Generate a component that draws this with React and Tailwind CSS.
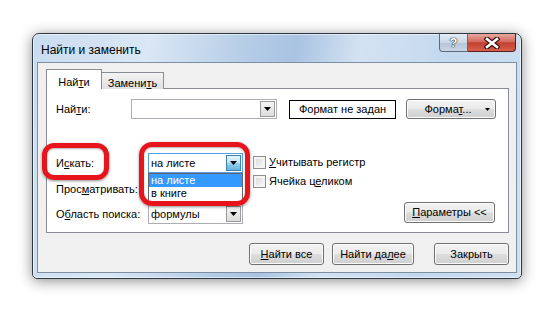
import React from "react";

const btn =
  "flex items-center justify-center rounded-[3px] border border-[#707070] bg-[linear-gradient(#f2f2f2_0%,#ebebeb_48%,#dddddd_52%,#cfcfcf_100%)] shadow-[inset_0_0_0_1px_#fcfcfc] text-[11px] text-black";

function Arrow({ active }) {
  return (
    <div
      className={`m-px flex w-[15px] items-center justify-center border ${
        active
          ? "border-[#3c7fb1] bg-[linear-gradient(#e5f4fc_0%,#c4e5f6_48%,#98d1ef_52%,#68b3db_100%)]"
          : "border-[#9a9a9a] bg-[linear-gradient(#f4f4f4,#dcdcdc)]"
      }`}
    >
      <svg width="7" height="4" viewBox="0 0 7 4">
        <path d="M0 0h7L3.5 4z" fill="#000" />
      </svg>
    </div>
  );
}

function Combo({ text, width, active, children }) {
  return (
    <div
      className={`relative flex h-[20px] ${width} border ${
        active ? "border-[#569de5]" : "border-[#abadb3]"
      } bg-white`}
    >
      <div className="flex flex-1 items-center pl-[2px] text-[11px] text-black">{text}</div>
      <Arrow active={active} />
      {children}
    </div>
  );
}

function Check({ children }) {
  return (
    <div className="flex h-[13px] items-center">
      <div className="h-[13px] w-[13px] border border-[#8e8f8f] bg-[linear-gradient(135deg,#d6d6d6,#fafafa)] shadow-[inset_0_0_0_2px_#f4f4f4]" />
      <span className="ml-[3px] text-[11px] text-black">{children}</span>
    </div>
  );
}

export default function App() {
  return (
    <div className="relative h-[313px] w-[553px] overflow-hidden bg-white pl-[32px] pt-[33px] font-['Liberation_Sans',Arial,sans-serif]">
      <div className="flex h-[246px] w-[490px] flex-col rounded-t-[7px] rounded-b-[5px] border border-[#2e3844] bg-[linear-gradient(100deg,#c9dcf0_0%,#dae7f5_22%,#b3cbe6_42%,#a9c3e2_50%,#d3e2f2_62%,#c3d8ee_80%,#cfe0f2_100%)] shadow-[inset_0_0_0_1px_rgba(255,255,255,0.55),0_2px_14px_rgba(0,0,0,0.45)]">
        {/* заголовок окна */}
        <div className="flex h-[28px]">
          <div className="pl-[8px] pt-[7px] text-[12px] text-black">Найти и заменить</div>
          <div className="ml-auto mr-[5px] flex">
            <div className="flex h-[18px] w-[29px] items-center justify-center rounded-bl-[4px] border border-t-0 border-[#5a6b80] bg-[linear-gradient(#e3ebf4_0%,#cbd8e7_50%,#b4c5d9_52%,#c9d6e4_100%)] text-[13px] font-bold text-white [text-shadow:0_0_1px_#222,0_0_1px_#222,0_0_1px_#222]">
              ?
            </div>
            <div className="flex h-[18px] w-[48px] items-center justify-center rounded-br-[4px] border border-l-0 border-t-0 border-[#5a1c16] bg-[linear-gradient(#e6a89f_0%,#d46a5d_45%,#c4402f_52%,#d4614f_100%)]">
              <svg width="16" height="12" viewBox="0 0 16 12">
                <path d="M3 2l10 8M13 2L3 10" stroke="#3a1410" strokeWidth="5" strokeLinecap="square" />
                <path d="M3 2l10 8M13 2L3 10" stroke="#fff" strokeWidth="2.6" strokeLinecap="square" />
              </svg>
            </div>
          </div>
        </div>

        {/* клиентская область */}
        <div className="mx-[4px] h-[211px] border border-[#7f8fa3] bg-[#f0f0f0] pl-[8px] pt-[6px]">
          <div className="relative z-10 flex h-[20px] items-end text-[11px] text-black">
            <div className="flex h-[20px] w-[56px] justify-center border border-b-0 border-[#898c95] bg-white pt-[4px]">
              Най<u>т</u>и
            </div>
            <div className="flex h-[17px] w-[62px] justify-center border border-b-0 border-l-0 border-[#898c95] bg-[linear-gradient(#f3f3f3,#e0e0e0)] pt-[2px]">
              Замени<span className="underline">т</span>ь
            </div>
          </div>

          <div className="-mt-px flex h-[145px] w-[463px] flex-col border border-[#898c95] bg-white text-[11px] text-black">
            {/* строка Найти */}
            <div className="mt-[10px] flex h-[20px] items-center">
              <div className="w-[84px] pl-[9px]">
                Най<u>т</u>и:
              </div>
              <Combo text="" width="w-[146px]" />
              <div className="ml-[12px] flex h-[19px] w-[107px] items-center justify-center border border-black">
                Формат не задан
              </div>
              <div className={`${btn} relative ml-[10px] h-[20px] w-[90px]`}>
                <span className="-ml-[6px]">
                  Форма<u>т</u>...
                </span>
                <svg className="absolute right-[5px] top-[8px]" width="5" height="3" viewBox="0 0 5 3">
                  <path d="M0 0h5L2.5 3z" fill="#000" />
                </svg>
              </div>
            </div>

            {/* параметры */}
            <div className="mt-[34px] flex">
              <div className="w-[196px]">
                <div className="flex h-[20px] items-center">
                  <div className="w-[101px] pl-[9px]">
                    И<u>с</u>кать:
                  </div>
                  <Combo text="на листе" width="w-[95px]" active>
                    <div className="absolute left-[-1px] top-[19px] z-20 h-[29px] w-[95px] border border-[#646464] bg-white">
                      <div className="h-[13px] bg-[#3399ff] pl-[2px] leading-[13px] text-white">на листе</div>
                      <div className="h-[13px] pl-[2px] leading-[13px]">в книге</div>
                    </div>
                  </Combo>
                </div>
                <div className="mt-[6px] flex h-[20px] items-center">
                  <div className="w-[101px] pl-[9px]">
                    Прос<u>м</u>атривать:
                  </div>
                  <Combo text="" width="w-[95px]" />
                </div>
                <div className="mt-[5px] flex h-[20px] items-center">
                  <div className="w-[101px] pl-[9px]">
                    О<u>б</u>ласть поиска:
                  </div>
                  <Combo text="формулы" width="w-[95px]" />
                </div>
              </div>

              <div className="ml-[10px] pt-[3px]">
                <Check>
                  <u>У</u>читывать регистр
                </Check>
                <div className="mt-[6px]">
                  <Check>
                    Ячейка ц<u>е</u>ликом
                  </Check>
                </div>
              </div>

              <div className="ml-auto mb-[1px] mr-[13px] self-end">
                <div className={`${btn} h-[21px] w-[91px]`}>
                  <u>П</u>араметры &lt;&lt;
                </div>
              </div>
            </div>
          </div>

          {/* кнопки */}
          <div className="mt-[10px] flex w-[463px] justify-end">
            <div className={`${btn} h-[22px] w-[75px]`}>
              <u>Н</u>айти все
            </div>
            <div className={`${btn} ml-[8px] h-[22px] w-[82px] border-[#3c7fb1] shadow-[inset_0_0_0_1px_#48d1ff]`}>
              Найти да<u>л</u>ее
            </div>
            <div className={`${btn} ml-[20px] h-[22px] w-[75px]`}>Закрыть</div>
          </div>
        </div>
      </div>

      {/* красные выделения */}
      <div className="absolute left-[42px] top-[143px] h-[37px] w-[67px] rounded-[12px] border-[5px] border-[#e8141c] shadow-[0_1px_3px_rgba(0,0,0,0.45),inset_0_1px_2px_rgba(0,0,0,0.3)]" />
      <div className="absolute left-[139px] top-[142px] z-30 h-[64px] w-[111px] rounded-[13px] border-[5px] border-[#e8141c] shadow-[0_1px_3px_rgba(0,0,0,0.45),inset_0_1px_2px_rgba(0,0,0,0.3)]" />
    </div>
  );
}
